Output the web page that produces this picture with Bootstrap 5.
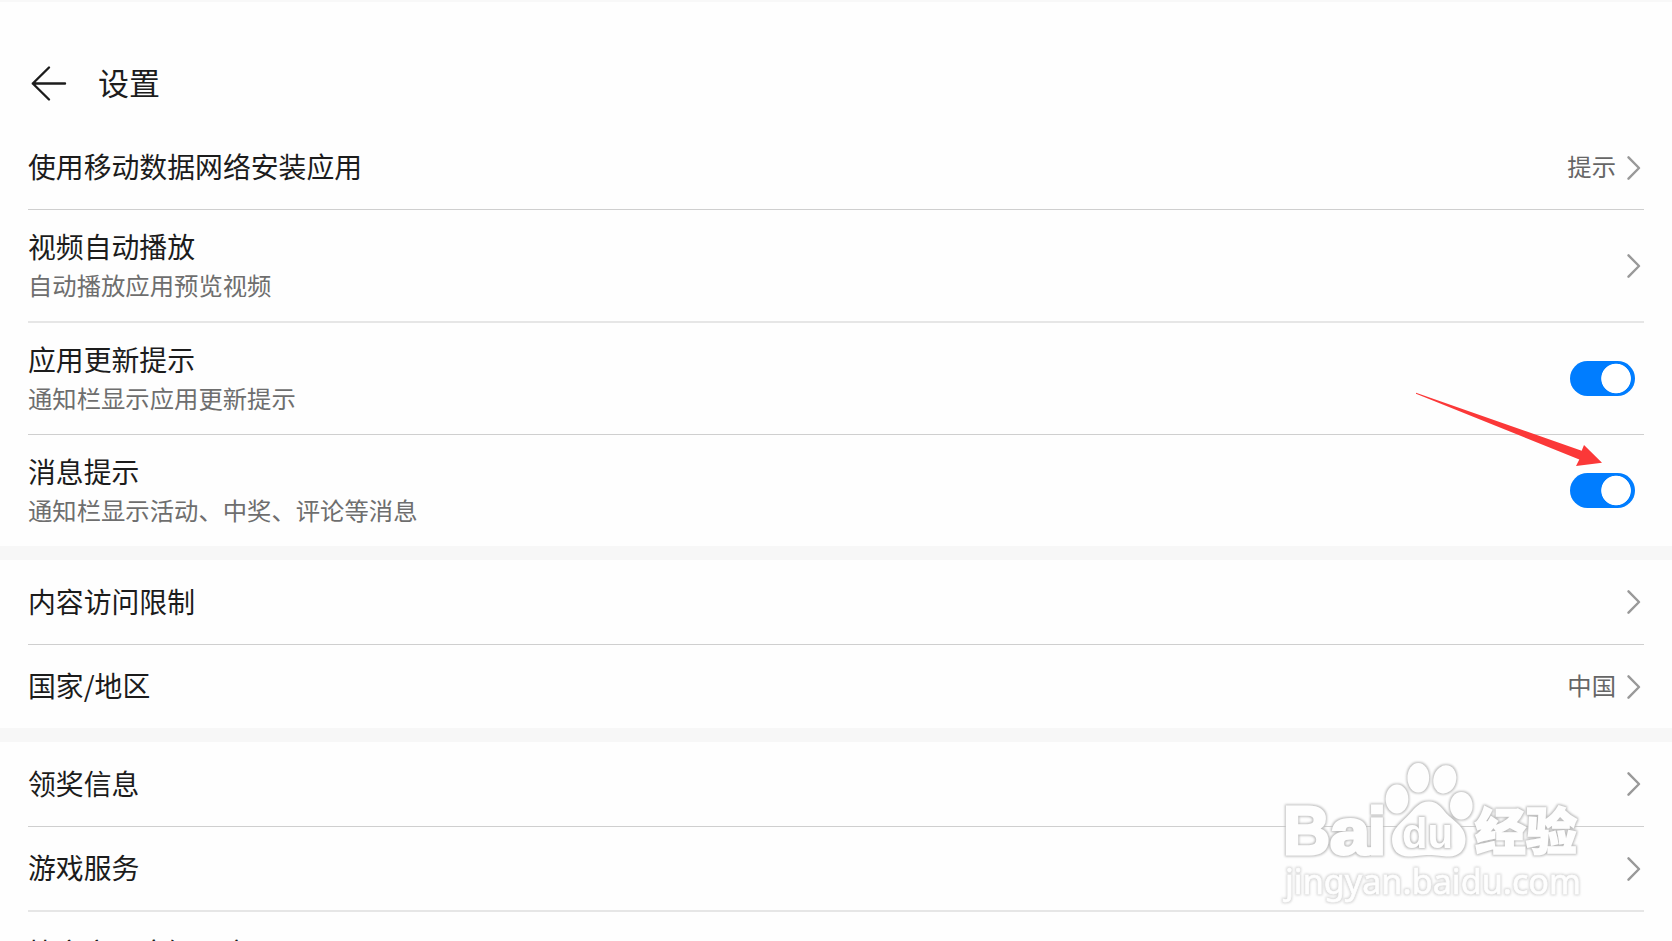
<!DOCTYPE html>
<html lang="zh-CN">
<head>
  <meta charset="UTF-8" />
  <meta name="viewport" content="width=device-width, initial-scale=1" />
  <title>设置</title>
  <link href="https://cdn.jsdelivr.net/npm/bootstrap@5.3.0/dist/css/bootstrap.min.css" rel="stylesheet" />
  <style>
    body {
      height: 100vh;
      overflow: hidden;
      background: #fefefe;
      color: #1c1c1c;
      font-family: "Noto Sans CJK SC", sans-serif;
    }
    .page-head {
      height: 126px;
      padding: 42px 31px 0;
      border-top: 2px solid #f8f8f8;
    }
    .page-head h1 {
      font-size: 31px;
      line-height: 76px;
      font-weight: 400;
      margin-left: 31px;
      color: #1c1c1c;
    }
    .settings-group {
      padding: 0 28px;
    }
    .settings-group + .settings-group {
      border-top: 14px solid #f7f7f7;
    }
    .setting-item {
      height: 85px;
      border-bottom: 1px solid #cfcfcf;
    }
    .setting-item.first-line {
      height: 84px;
    }
    .setting-item.last-line {
      height: 83px;
    }
    .setting-item.two-line {
      height: 112px;
    }
    .setting-item.two-line.last-line {
      height: 111px;
    }
    .setting-item.soft-line {
      border-bottom: 2px solid #e6e6e6;
    }
    .setting-item.two-line.soft-line {
      height: 113px;
    }
    .setting-text {
      margin-top: -3px;
    }
    .first-line .setting-text,
    .last-line .setting-text,
    .soft-line .setting-text {
      margin-top: -4px;
    }
    .two-line .setting-text {
      margin-top: -2px;
    }
    .setting-title {
      font-size: 27.85px;
      line-height: 40px;
    }
    .setting-desc {
      font-size: 24.35px;
      line-height: 37px;
      color: #6e6e6e;
    }
    .setting-value {
      font-size: 24.35px;
      line-height: 36px;
      color: #666;
      margin: -3px 11px 0 0;
    }
    .arrow-right {
      width: 14px;
      height: 26px;
      margin-right: 3px;
    }
    .form-check-input.toggle {
      width: 64.5px;
      height: 35px;
      margin: -1px 9.5px 0 0;
      border: 0;
      border-radius: 18px;
      background-color: #007dff;
      background-image: radial-gradient(circle at 46.3px 17.5px, #fff 14.4px, transparent 15.2px);
      background-size: 100% 100%;
    }
    .overlay {
      top: 0;
      left: 0;
      pointer-events: none;
    }
  </style>
</head>
<body>

  <header class="page-head d-flex align-items-start">
    <svg class="flex-shrink-0" width="36" height="80" viewBox="0 0 36 80" fill="none" stroke="#1c1c1c" stroke-width="2.4" stroke-linecap="round" stroke-linejoin="round">
      <path d="M34 39.500H1.800M18 23.500L1.800 39.500L18 55.500" />
    </svg>
    <h1 class="mb-0">设置</h1>
  </header>

  <main id="settings"></main>

  <svg class="overlay position-absolute" width="1672" height="941" viewBox="0 0 1672 941">
    <defs>
      <!-- soft grey rim around white shapes -->
      <filter id="rim" x="-5%" y="-5%" width="110%" height="110%">
        <feMorphology in="SourceAlpha" operator="dilate" radius="1" result="fat" />
        <feGaussianBlur in="fat" stdDeviation="1" result="soft" />
        <feFlood flood-color="#bdbdbd" />
        <feComposite in2="soft" operator="in" result="grey" />
        <feMerge>
          <feMergeNode in="grey" />
          <feMergeNode in="SourceGraphic" />
        </feMerge>
      </filter>
    </defs>

    <path fill="#fb3838" d="M1416 392.700L1581.700 450.700L1584 445L1602 462.700L1576 466L1579.300 459.600L1416 393.700Z" />

    <g fill="#fefefe" filter="url(#rim)">
      <ellipse cx="1397" cy="799" rx="11.3" ry="14.5" />
      <ellipse cx="1418.3" cy="777.8" rx="10.8" ry="14.8" />
      <ellipse cx="1444.8" cy="779.4" rx="11.3" ry="14.2" transform="rotate(14 1444.8 779.4)" />
      <ellipse cx="1461.3" cy="805.7" rx="11.3" ry="13.8" />
      <path d="M1429 801.500C1437 801.500 1441 807 1445 812C1451 819.500 1465.500 826 1465.500 839C1465.500 850 1459 856.500 1449 856.500C1442 856.500 1437 855 1429 855C1421 855 1416 856.500 1409 856.500C1398 856.500 1392 850 1392 839C1392 829 1402 822 1410 813.500C1415 808 1420 801.500 1429 801.500Z" />
      <g stroke="#fefefe" stroke-width="3" font-family="'Liberation Sans', sans-serif" font-weight="700">
        <text x="1283" y="854" font-size="69" textLength="47" lengthAdjust="spacingAndGlyphs">B</text>
        <text x="1330" y="854" font-size="65" textLength="40" lengthAdjust="spacingAndGlyphs">a</text>
        <text x="1368" y="854" font-size="66" textLength="18" lengthAdjust="spacingAndGlyphs">i</text>
      </g>
      <text x="1475" y="850" font-size="50" font-weight="900" stroke="#fefefe" stroke-width="1.5" textLength="102" lengthAdjust="spacingAndGlyphs" font-family="'Noto Sans CJK SC', sans-serif">经验</text>
    </g>
    <g fill="#fefefe" filter="url(#rim)">
      <text x="1402" y="848" font-size="43" font-weight="700" textLength="51" lengthAdjust="spacingAndGlyphs" font-family="'Liberation Sans', sans-serif">du</text>
    </g>
    <g fill="#fefefe" filter="url(#rim)" opacity=".6">
      <text x="1285" y="894" font-size="34.5" stroke="#fefefe" stroke-width=".6" textLength="296" lengthAdjust="spacingAndGlyphs" font-family="'Noto Sans', sans-serif">jingyan.baidu.com</text>
    </g>
  </svg>

  <script src="https://cdn.jsdelivr.net/npm/bootstrap@5.3.0/dist/js/bootstrap.bundle.min.js"></script>
  <script>
    const groups = [
      [
        { title: "使用移动数据网络安装应用", value: "提示", line: "first-line" },
        { title: "视频自动播放", desc: "自动播放应用预览视频", line: "soft-line" },
        { title: "应用更新提示", desc: "通知栏显示应用更新提示", toggle: true },
        { title: "消息提示", desc: "通知栏显示活动、中奖、评论等消息", toggle: true, last: true }
      ],
      [
        { title: "内容访问限制" },
        { title: "国家/地区", value: "中国", last: true }
      ],
      [
        { title: "领奖信息" },
        { title: "游戏服务", line: "soft-line" },
        { title: "快充安置应知用宜", last: true }
      ]
    ];

    const chevron = `
      <svg class="arrow-right flex-shrink-0" viewBox="0 0 14 26" fill="none" stroke="#999" stroke-width="2.4" stroke-linecap="round" stroke-linejoin="round">
        <path d="M1.500 2.300L12 13L1.500 23.700" />
      </svg>`;

    function renderItem(item) {
      const classes = ["setting-item", "d-flex", "align-items-center"];
      if (item.desc) classes.push("two-line");
      if (item.line) classes.push(item.line);
      if (item.last) classes.push("last-line", "border-bottom-0");

      const right = item.toggle
        ? `<input class="form-check-input toggle" type="checkbox" role="switch" aria-label="${item.title}" checked>`
        : `${item.value ? `<span class="setting-value">${item.value}</span>` : ""}${chevron}`;

      return `
        <div class="${classes.join(" ")}">
          <div class="setting-text flex-grow-1">
            <div class="setting-title">${item.title}</div>
            ${item.desc ? `<div class="setting-desc">${item.desc}</div>` : ""}
          </div>
          ${right}
        </div>`;
    }

    document.getElementById("settings").innerHTML = groups
      .map(items => `<section class="settings-group">${items.map(renderItem).join("")}</section>`)
      .join("");
  </script>

</body>
</html>
